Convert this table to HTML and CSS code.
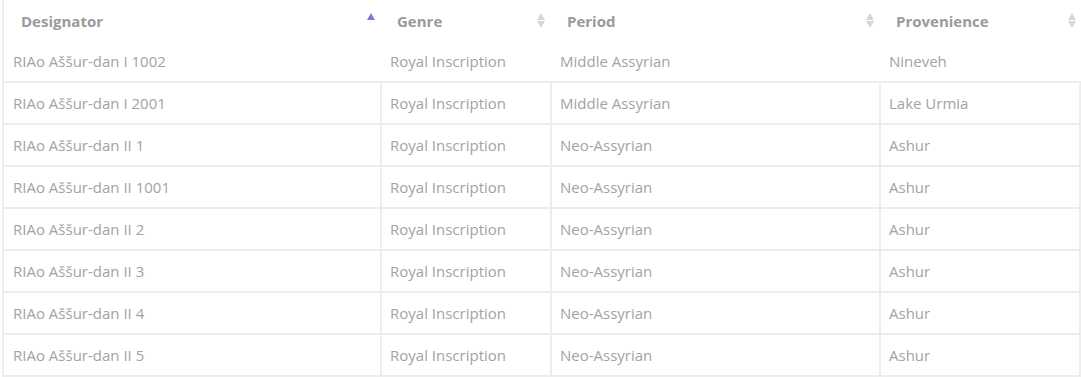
FILE: index.html
```html
<!DOCTYPE html>
<html>
<head>
<meta charset="utf-8">
<link rel="stylesheet" href="styles.css">
</head>
<body>
<div class="wrap">
<table class="grid">
<colgroup>
<col class="c1"><col class="c2"><col class="c3"><col class="c4">
</colgroup>
<thead>
<tr>
<th><div class="hd"><span>Designator</span><span class="sort active"><i class="up"></i><i class="down"></i></span></div></th>
<th><div class="hd"><span>Genre</span><span class="sort"><i class="up"></i><i class="down"></i></span></div></th>
<th><div class="hd"><span>Period</span><span class="sort"><i class="up"></i><i class="down"></i></span></div></th>
<th><div class="hd"><span>Provenience</span><span class="sort"><i class="up"></i><i class="down"></i></span></div></th>
</tr>
</thead>
<tbody>
<tr class="first"><td>RIAo Aššur-dan I 1002</td><td>Royal Inscription</td><td>Middle Assyrian</td><td>Nineveh</td></tr>
<tr><td>RIAo Aššur-dan I 2001</td><td>Royal Inscription</td><td>Middle Assyrian</td><td>Lake Urmia</td></tr>
<tr><td>RIAo Aššur-dan II 1</td><td>Royal Inscription</td><td>Neo-Assyrian</td><td>Ashur</td></tr>
<tr><td>RIAo Aššur-dan II 1001</td><td>Royal Inscription</td><td>Neo-Assyrian</td><td>Ashur</td></tr>
<tr><td>RIAo Aššur-dan II 2</td><td>Royal Inscription</td><td>Neo-Assyrian</td><td>Ashur</td></tr>
<tr><td>RIAo Aššur-dan II 3</td><td>Royal Inscription</td><td>Neo-Assyrian</td><td>Ashur</td></tr>
<tr><td>RIAo Aššur-dan II 4</td><td>Royal Inscription</td><td>Neo-Assyrian</td><td>Ashur</td></tr>
<tr><td>RIAo Aššur-dan II 5</td><td>Royal Inscription</td><td>Neo-Assyrian</td><td>Ashur</td></tr>
</tbody>
</table>
</div>
</body>
</html>
```

FILE: styles.css
```css
html, body {
  margin: 0;
  padding: 0;
  background: #fff;
}
body {
  font-family: "Open Sans", "Noto Sans", sans-serif;
  font-size: 15px;
}
.wrap {
  padding-left: 2px;
}
.grid {
  width: 1079px;
  table-layout: fixed;
  border-collapse: separate;
  border-spacing: 0;
  border-left: 2px solid #ededed;
}
.c1 { width: 376px; }
.c2 { width: 170px; }
.c3 { width: 329px; }
.c4 { width: 202px; }
th {
  height: 41px;
  padding: 0 5px 0 17px;
  text-align: left;
  font-weight: 700;
  font-size: 15px;
  color: #9a9a9a;
  box-sizing: border-box;
}
th + th { padding-left: 17px; }
.hd {
  display: flex;
  align-items: center;
  justify-content: space-between;
}
.sort {
  display: flex;
  flex-direction: column;
  gap: 1px;
  width: 9px;
  align-items: center;
}
.sort i {
  display: block;
  width: 0;
  height: 0;
  border-left: 4px solid transparent;
  border-right: 4px solid transparent;
}
.sort .up { border-bottom: 7px solid #d6d6d6; }
.sort .down { border-top: 7px solid #d6d6d6; }
.sort.active .up { border-bottom-color: #7b7ad6; }
.sort.active .down { border-top-color: transparent; }
td {
  height: 42px;
  padding: 0 8px 0 8px;
  color: #a3a3a3;
  white-space: nowrap;
  border-bottom: 2px solid #ededed;
  border-left: 2px solid #ededed;
  box-sizing: border-box;
}
td:first-child {
  border-left: none;
  padding-left: 9px;
}
td:last-child { border-right: 2px solid #ededed; }
tr.first td {
  border-left: none;
  border-right: none;
  height: 42px;
  padding-left: 10px;
}
tr.first td:first-child { padding-left: 9px; }
```
